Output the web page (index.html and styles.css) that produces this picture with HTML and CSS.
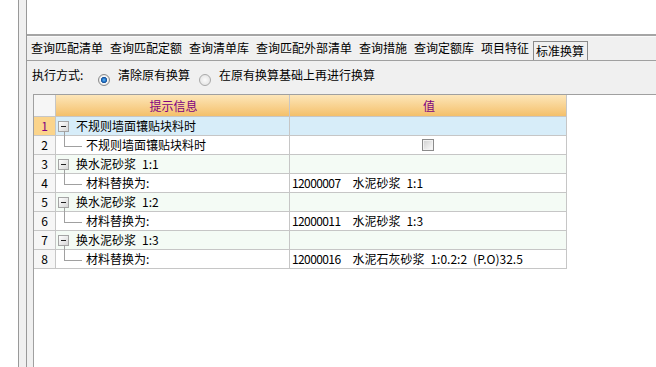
FILE: index.html
```html
<!DOCTYPE html>
<html lang="zh-CN">
<head>
    <meta charset="UTF-8">
    <meta name="viewport" content="width=device-width, initial-scale=1.0">
    <title>标准换算</title>
    <link rel="stylesheet" href="styles.css">
</head>
<body>
    <div class="gap"></div>
    <div class="splitter"></div>
    <div class="main">
        <div class="top-panel"></div>
        <div class="tabs">
            <span class="tab">查询匹配清单</span>
            <span class="tab">查询匹配定额</span>
            <span class="tab">查询清单库</span>
            <span class="tab">查询匹配外部清单</span>
            <span class="tab">查询措施</span>
            <span class="tab">查询定额库</span>
            <span class="tab">项目特征</span>
            <span class="tab active">标准换算</span>
        </div>
        <div class="options">
            <span class="opt-label">执行方式:</span>
            <span class="radio checked"></span>
            <span class="radio-text">清除原有换算</span>
            <span class="radio"></span>
            <span class="radio-text">在原有换算基础上再进行换算</span>
        </div>
        <div class="grid-box">
            <div class="grid">
                <div class="row head">
                    <div class="num"></div>
                    <div class="c1">提示信息</div>
                    <div class="c2">值</div>
                </div>
                <div class="row group selected">
                    <div class="num">1</div>
                    <div class="c1"><span class="exp"></span>不规则墙面镶贴块料时</div>
                    <div class="c2"></div>
                </div>
                <div class="row">
                    <div class="num">2</div>
                    <div class="c1 child">不规则墙面镶贴块料时</div>
                    <div class="c2 center"><span class="check"></span></div>
                </div>
                <div class="row group">
                    <div class="num">3</div>
                    <div class="c1"><span class="exp"></span>换水泥砂浆 1:1</div>
                    <div class="c2"></div>
                </div>
                <div class="row">
                    <div class="num">4</div>
                    <div class="c1 child">材料替换为:</div>
                    <div class="c2"><span class="code">12000007</span>  水泥砂浆 1:1</div>
                </div>
                <div class="row group">
                    <div class="num">5</div>
                    <div class="c1"><span class="exp"></span>换水泥砂浆 1:2</div>
                    <div class="c2"></div>
                </div>
                <div class="row">
                    <div class="num">6</div>
                    <div class="c1 child">材料替换为:</div>
                    <div class="c2"><span class="code">12000011</span>  水泥砂浆 1:3</div>
                </div>
                <div class="row group">
                    <div class="num">7</div>
                    <div class="c1"><span class="exp"></span>换水泥砂浆 1:3</div>
                    <div class="c2"></div>
                </div>
                <div class="row">
                    <div class="num">8</div>
                    <div class="c1 child">材料替换为:</div>
                    <div class="c2"><span class="code">12000016</span>  水泥石灰砂浆 1:0.2:2 (P.O)32.5</div>
                </div>
            </div>
        </div>
    </div>
</body>
</html>
```

FILE: styles.css
```css
html, body {
    margin: 0;
    padding: 0;
}
body {
    width: 656px;
    height: 367px;
    overflow: hidden;
    display: flex;
    background-color: white;
    font-family: "Noto Sans CJK SC", "Liberation Sans", sans-serif;
    font-size: 12px;
    color: #000;
    word-spacing: 3.3px;
}
* {
    box-sizing: border-box;
}
.gap {
    width: 18px;
}
.splitter {
    width: 9px;
    border-left: 1px solid #999;
    border-right: 1px solid #999;
    background-color: #f0f0f0;
}
.main {
    flex: 1;
    display: flex;
    flex-direction: column;
    background-color: #f0f0f0;
}
.top-panel {
    height: 36px;
    background-color: white;
    border-bottom: 2px solid #a5a5a5;
}
.tabs {
    display: flex;
    align-items: flex-end;
    padding: 2px 0 0 1px;
    border-top: 1px solid #fafafa;
    border-bottom: 1px solid #a0a0a0;
}
.tab {
    line-height: 16px;
    padding: 0 3px 4px 2px;
    border: 1px solid transparent;
    border-bottom: 0;
    white-space: nowrap;
}
.tab.active {
    line-height: 18px;
    padding-bottom: 0;
    border-color: #8a8a8a;
}
.options {
    display: flex;
    align-items: flex-start;
    padding: 6px 0 8px 5px;
    line-height: 16px;
}
.opt-label {
    width: 66px;
}
.radio {
    width: 12px;
    height: 12px;
    margin: 7px 8px 0 0;
    border-radius: 50%;
    border: 1px solid #a9a9a9;
    background: radial-gradient(circle, #fbfbfb 0, #e2e2e2 6px);
}
.radio.checked {
    border-color: #8c8c8c;
    background: radial-gradient(circle, #6ab8f0 0, #2275c8 1.8px, #184f96 2.8px, #f8f8f8 3.4px, #d9d9d9 6px);
}
.radio-text {
    margin-right: 9px;
}
.grid-box {
    flex: 1;
    margin-left: 6px;
    border-left: 1px solid #a0a0a0;
    border-top: 1px solid #a0a0a0;
    background-color: white;
}
.grid {
    width: 533px;
}
.row {
    display: flex;
    height: 19px;
    line-height: 18px;
    border-bottom: 1px solid #c6c6c6;
    white-space: pre;
}
.row.head {
    height: 22px;
    line-height: 21px;
    color: #800080;
    text-align: center;
}
.num {
    width: 22px;
    border-right: 1px solid #c6c6c6;
    text-align: center;
    background-color: #f6f6f6;
}
.c1 {
    width: 234px;
    display: flex;
    align-items: center;
    padding-left: 2px;
    border-right: 1px solid #c6c6c6;
}
.c2 {
    width: 277px;
    padding-left: 2px;
    border-right: 1px solid #c6c6c6;
}
.code {
    letter-spacing: -0.6px;
}
.head .c1 {
    justify-content: center;
}
.head .c1, .head .c2 {
    background: linear-gradient(#fde6b9, #f4c06b);
}
.group .c1, .group .c2 {
    background-color: #f4fbf5;
}
.selected .c1, .selected .c2 {
    background-color: #d7edf9;
}
.selected .num {
    background-color: #fbd48b;
    color: #800080;
}
.exp {
    display: flex;
    align-items: center;
    justify-content: center;
    width: 11px;
    height: 11px;
    margin-right: 7px;
    border: 1px solid #a5a5a5;
    background: linear-gradient(135deg, #fff, #d6d6d6);
}
.exp::after {
    content: '';
    width: 5px;
    height: 1px;
    background-color: #222;
}
.c1.child {
    position: relative;
    padding-left: 30px;
}
.c1.child::before {
    content: '';
    position: absolute;
    left: 8px;
    top: -5px;
    width: 17px;
    height: 15px;
    border-left: 1px solid #a0a0a0;
    border-bottom: 1px solid #a0a0a0;
}
.c2.center {
    display: flex;
    align-items: center;
    justify-content: center;
    padding-left: 0;
}
.check {
    width: 12px;
    height: 12px;
    border: 1px solid #8b8b8b;
    background: linear-gradient(135deg, #cfcfcf, #fdfdfd);
    box-shadow: inset 0 0 0 1px #f2f2f2;
}
```
